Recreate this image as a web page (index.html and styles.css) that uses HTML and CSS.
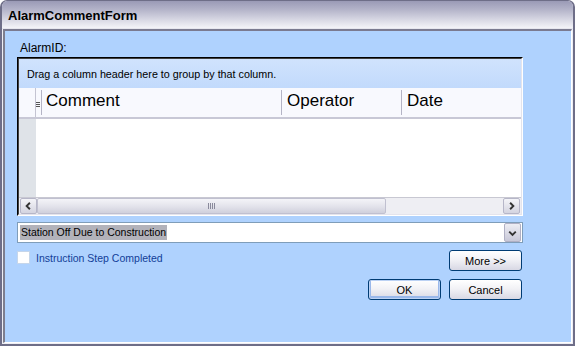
FILE: index.html
```html
<!DOCTYPE html>
<html lang="en">
<head>
    <meta charset="UTF-8">
    <title>AlarmCommentForm</title>
    <link rel="stylesheet" href="styles.css">
</head>
<body>
    <div class="window">
        <div class="titlebar">
            <span class="title">AlarmCommentForm</span>
        </div>

        <div class="client">
            <div class="field-label">AlarmID:</div>

            <div class="grid">
                <div class="grid-inner">
                    <div class="group-panel">Drag a column header here to group by that column.</div>

                    <div class="grid-header">
                        <div class="row-sel-head"></div>
                        <div class="col col-comment">
                            <svg class="grip" viewBox="0 0 4 6" width="4" height="6">
                                <path d="M0 0.5H4M0 2.5H4M0 4.5H4" stroke="#555" stroke-width="1"/>
                            </svg>
                            <span class="sep"></span>
                            <span class="col-title">Comment</span>
                        </div>
                        <div class="col col-operator">
                            <span class="sep"></span>
                            <span class="col-title">Operator</span>
                        </div>
                        <div class="col col-date">
                            <span class="sep"></span>
                            <span class="col-title">Date</span>
                        </div>
                    </div>

                    <div class="grid-body">
                        <div class="row-sel"></div>
                        <div class="rows"></div>
                    </div>

                    <div class="hscroll">
                        <div class="sb-btn">
                            <svg viewBox="0 0 16 16" width="16" height="16">
                                <path d="M9.5 4.5L6 8l3.5 3.5" fill="none" stroke="#333" stroke-width="2"/>
                            </svg>
                        </div>
                        <div class="sb-track">
                            <div class="sb-thumb">
                                <span class="sb-grip"></span>
                            </div>
                        </div>
                        <div class="sb-btn">
                            <svg viewBox="0 0 16 16" width="16" height="16">
                                <path d="M6.5 4.5L10 8l-3.5 3.5" fill="none" stroke="#333" stroke-width="2"/>
                            </svg>
                        </div>
                    </div>
                </div>
            </div>

            <div class="combo">
                <span class="combo-text">Station Off Due to Construction</span>
                <div class="combo-btn">
                    <svg viewBox="0 0 16 16" width="16" height="16">
                        <path d="M4.5 6.5L8 10l3.5-3.5" fill="none" stroke="#333" stroke-width="2"/>
                    </svg>
                </div>
            </div>

            <div class="check-row">
                <label class="check">
                    <span class="check-box"></span>
                    <span class="check-label">Instruction Step Completed</span>
                </label>
                <button class="btn">More &gt;&gt;</button>
            </div>

            <div class="btn-row">
                <button class="btn btn-default">OK</button>
                <button class="btn">Cancel</button>
            </div>
        </div>
    </div>
</body>
</html>
```

FILE: styles.css
```css
* {
    margin: 0;
    padding: 0;
    box-sizing: border-box;
}

body {
    font-family: "Liberation Sans", Arial, sans-serif;
    font-size: 11px;
    background: #fff;
}

.window {
    width: 575px;
    height: 346px;
    border: 2px solid #6e6e88;
    border-top-width: 1px;
    border-radius: 7px 7px 0 0;
    background: #eeeef4;
    display: flex;
    flex-direction: column;
    overflow: hidden;
}

.titlebar {
    height: 28px;
    padding: 0 6px;
    display: flex;
    align-items: center;
    background: linear-gradient(to bottom, #9a9ab6 0%, #b2b2c8 30%, #d8d8e4 70%, #f4f4f8 100%);
    border-bottom: 1px solid #e6e6ee;
}

.title {
    font-size: 13px;
    font-weight: bold;
    color: #000;
    padding-top: 1px;
}

.client {
    flex: 1;
    margin: 0 1px 1px 1px;
    background: #afd2fe;
    border-top: 2px solid #7a7a90;
    border-left: 2px solid #7e7e8e;
    border-right: 1px solid #fff;
    border-bottom: 1px solid #fff;
    padding: 10px 0 0 12px;
}

.field-label {
    font-size: 12px;
    line-height: 14px;
    padding-left: 3px;
    color: #000;
}

.grid {
    margin-top: 2px;
    width: 506px;
    border: 1px solid;
    border-color: #000 #fff #fff #000;
}

.grid-inner {
    border: 1px solid;
    border-color: #404040 #e4e4ec #e4e4ec #404040;
    background: #fff;
}

.group-panel {
    height: 29px;
    padding: 0 8px;
    display: flex;
    align-items: center;
    background: linear-gradient(to bottom, #d0e3fd 0%, #c2dafc 100%);
    font-size: 10.75px;
    color: #000;
}

.grid-header {
    height: 31px;
    display: flex;
    background: #f8f9fe;
    border-bottom: 2px solid #c8c8d6;
}

.row-sel-head {
    width: 17px;
    border-right: 1px solid #c4c4d2;
}

.col {
    display: flex;
    align-items: center;
    height: 100%;
}

.col-comment {
    width: 245px;
}

.col-operator,
.col-date {
    width: 120px;
}

.grip {
    margin: 4px 1px 0 0;
}

.sep {
    width: 1px;
    height: 25px;
    background: #b4b4c6;
}

.col-title {
    padding: 0 0 3px 5px;
    font-size: 17px;
    color: #000;
}

.col-comment .col-title {
    padding-left: 4px;
}

.grid-body {
    height: 78px;
    display: flex;
}

.row-sel {
    width: 17px;
    background: #dfe3e8;
}

.rows {
    flex: 1;
    background: #fff;
}

.hscroll {
    height: 17px;
    display: flex;
    border-top: 1px solid #c8c8d2;
    background: #eeeef3;
    padding: 0 1px 0 1px;
}

.sb-btn {
    width: 17px;
    height: 16px;
    border: 1px solid #b6b6c8;
    border-radius: 2px;
    background: linear-gradient(to bottom, #f4f4f8, #d4d4e0);
    display: flex;
    align-items: center;
    justify-content: center;
}

.sb-track {
    flex: 1;
    display: flex;
}

.sb-thumb {
    width: 349px;
    height: 16px;
    border: 1px solid #c0c0d0;
    border-radius: 2px;
    background: linear-gradient(to bottom, #f4f4f8 0%, #e4e4ec 50%, #d0d0dc 100%);
    display: flex;
    align-items: center;
    justify-content: center;
}

.sb-grip {
    width: 7px;
    height: 6px;
    background: repeating-linear-gradient(to right, #8a8a9c 0 1px, transparent 1px 2px);
}

.combo {
    margin-top: 6px;
    width: 506px;
    height: 21px;
    border: 1px solid #7f9db9;
    background: #fff;
    display: flex;
    align-items: center;
    justify-content: space-between;
    padding: 0 1px 0 2px;
}

.combo-text {
    background: #b2b2ba;
    color: #000;
    font-size: 10.5px;
    line-height: 15px;
    padding: 0 1px;
}

.combo-btn {
    width: 17px;
    height: 19px;
    border: 1px solid #b0b0c4;
    border-radius: 2px;
    background: linear-gradient(to bottom, #eeeef4, #c8c8d8);
    display: flex;
    align-items: center;
    justify-content: center;
}

.check-row {
    margin-top: 7px;
    width: 505px;
    display: flex;
    justify-content: space-between;
    align-items: flex-start;
}

.check {
    display: flex;
    align-items: center;
    padding-top: 1px;
}

.check-box {
    width: 13px;
    height: 13px;
    background: #fff;
    border: 1px solid #c6d6ea;
}

.check-label {
    margin-left: 6px;
    color: #123e98;
    font-size: 10.5px;
}

.btn-row {
    margin-top: 8px;
    width: 505px;
    display: flex;
    justify-content: flex-end;
    gap: 8px;
}

.btn {
    width: 73px;
    height: 21px;
    border: 1px solid #003c74;
    border-radius: 3px;
    background: linear-gradient(to bottom, #ffffff 0%, #f2f2f6 45%, #d8d8e4 100%);
    font-family: "Liberation Sans", Arial, sans-serif;
    font-size: 11px;
    color: #000;
}

.btn-default {
    box-shadow: inset 0 0 0 1px #bcd2f4, inset 0 -1px 0 2px #9ab8ea;
}
```
